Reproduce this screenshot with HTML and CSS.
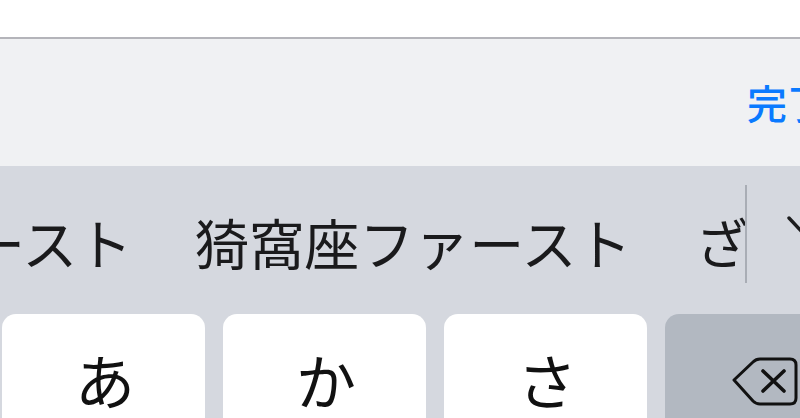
FILE: index.html
```html
<!DOCTYPE html>
<html lang="ja">
<head>
<meta charset="utf-8">
<link rel="stylesheet" href="styles.css">
<title>キーボード</title>
</head>
<body>
<div class="top"></div>
<div class="toolbar"><span class="done">完了</span></div>
<div class="keyboard">
  <div class="candidates">
    <span class="cand first">ースト</span>
    <span class="cand second">猗窩座ファースト</span>
    <span class="cand third">ざ</span>
    <span class="divider"></span>
    <svg class="chevron" width="54" height="30" viewBox="0 0 54 30"><path d="M2 2 L15 16 L28 2" fill="none" stroke="#1c1c1e" stroke-width="3.4" stroke-linecap="round" stroke-linejoin="round"/></svg>
  </div>
  <div class="keys">
    <div class="key">あ</div>
    <div class="key">か</div>
    <div class="key">さ</div>
    <div class="key dark">
      <svg class="back" width="68" height="50" viewBox="0 0 68 50"><path d="M2 23 L21 5 Q24 2 28 2 H58 Q64 2 64 8 V41 Q64 47 58 47 H28 Q24 47 21 44 Z" fill="none" stroke="#111" stroke-width="3" stroke-linejoin="round"/><path d="M31 14 L52 34 M52 14 L31 34" fill="none" stroke="#111" stroke-width="3.6" stroke-linecap="round"/></svg>
    </div>
  </div>
</div>
</body>
</html>
```
FILE: styles.css
```css
* { box-sizing: border-box; }
html, body { margin: 0; padding: 0; }
body {
  width: 800px;
  height: 418px;
  overflow: hidden;
  background: #fff;
  font-family: "Noto Sans CJK JP", "Noto Sans", sans-serif;
  display: flex;
  flex-direction: column;
}
.top {
  height: 39px;
  flex: none;
  background: #fff;
  border-bottom: 2px solid #b4b4ba;
}
.toolbar {
  height: 127px;
  flex: none;
  background: #f0f1f3;
  display: flex;
  align-items: center;
  padding-left: 747px;
  padding-bottom: 2px;
  white-space: nowrap;
  overflow: hidden;
}
.done {
  font-size: 40px;
  line-height: 48px;
  font-weight: 500;
  color: #0a7aff;
  flex: none;
}
.keyboard {
  flex: 1;
  background: #d5d8df;
  overflow: hidden;
}
.candidates {
  height: 148px;
  display: flex;
  align-items: center;
  white-space: nowrap;
  width: 860px;
}
.cand {
  font-size: 55px;
  line-height: 64px;
  font-weight: 400;
  color: #1a1a1c;
  flex: none;
  margin-top: 2px;
}
.first { margin-left: -30px; }
.second { margin-left: 62px; }
.third { margin-left: 64px; font-size: 53px; }
.divider {
  width: 2px;
  height: 98px;
  background: #a9adb5;
  flex: none;
  align-self: flex-start;
  margin-top: 19px;
  margin-left: -4px;
}
.chevron {
  flex: none;
  align-self: flex-start;
  margin-left: 40px;
  margin-top: 50px;
}
.keys {
  display: flex;
  gap: 18px;
  padding-left: 1.5px;
  width: 900px;
}
.key {
  width: 203px;
  height: 140px;
  flex: none;
  background: #fff;
  border-radius: 14px;
  font-size: 60px;
  line-height: 64px;
  padding-top: 33px;
  padding-left: 4px;
  text-align: center;
  color: #111;
  font-weight: 400;
}
.dark {
  background: #b2b8c1;
  padding-top: 43px;
  padding-left: 67.5px;
  text-align: left;
}
.back { display: block; }
```
